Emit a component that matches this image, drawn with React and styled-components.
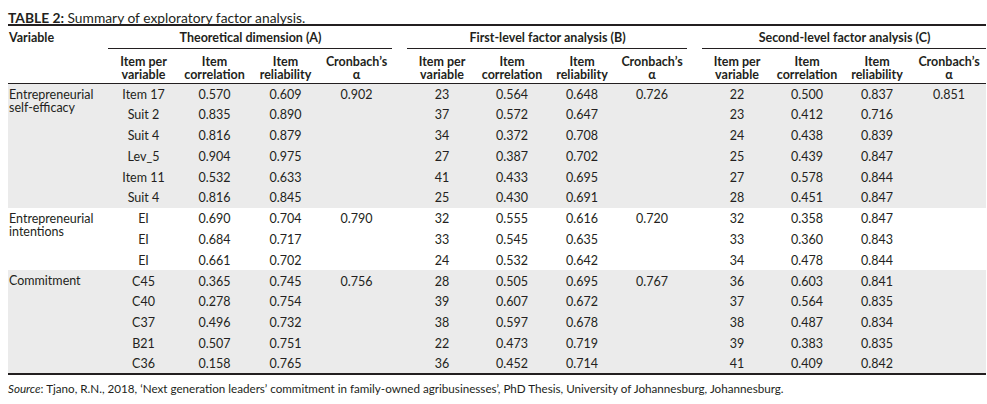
import React from "react";
import styled, { createGlobalStyle } from "styled-components";

const GlobalStyle = createGlobalStyle`
    body {
        margin: 0;
        background: #ffffff;
        font-family: Lato, "Open Sans", sans-serif;
        color: #231f20;
    }
`;

const Page = styled.div`
    padding: 8px 0 0 8px;
    width: 979px;
`;

const Caption = styled.div`
    font-size: 13.8px;
    line-height: 20px;
    height: 16px;
    white-space: nowrap;
`;

const Strong = styled.span`
    font-weight: 700;
`;

const Table = styled.table`
    width: 978px;
    border-collapse: collapse;
    table-layout: fixed;
    border-top: 2px solid #231f20;
    border-bottom: 2px solid #231f20;
    font-size: 12.5px;
`;

const Col = styled.col`
    width: ${p => p.w}px;
`;

const GroupRow = styled.tr`
    height: 23px;
`;

const HeadCell = styled.th`
    font-weight: 700;
    text-align: ${p => (p.left ? "left" : "center")};
    vertical-align: middle;
    padding: 1px 0 0 1px;
    line-height: 13px;
    white-space: nowrap;
    border-bottom: ${p => (p.underline ? "1px solid #231f20" : "none")};
`;

const SubRow = styled.tr`
    height: 35px;
    border-bottom: 1px solid #231f20;
`;

const SubCell = styled.th`
    font-weight: 700;
    text-align: center;
    vertical-align: top;
    padding: 6px 0 0;
    line-height: 13px;
`;

const Row = styled.tr`
    height: 20.8px;
    background: ${p => (p.shaded ? "#ebebeb" : "#ffffff")};
`;

const VarCell = styled.td`
    vertical-align: top;
    padding: 4px 0 0 1px;
    line-height: 13px;
`;

const Cell = styled.td`
    text-align: center;
    vertical-align: middle;
    padding: 1px 0 0;
    line-height: 13px;
    white-space: nowrap;
`;

const Source = styled.div`
    font-size: 11.65px;
    line-height: 15px;
    margin-top: 6px;
    white-space: nowrap;
`;

const groups = [
    {
        name: "Entrepreneurial self-efficacy",
        shaded: true,
        alphas: ["0.902", "0.726", "0.851"],
        rows: [
            ["Item 17", "0.570", "0.609", "23", "0.564", "0.648", "22", "0.500", "0.837"],
            ["Suit 2", "0.835", "0.890", "37", "0.572", "0.647", "23", "0.412", "0.716"],
            ["Suit 4", "0.816", "0.879", "34", "0.372", "0.708", "24", "0.438", "0.839"],
            ["Lev_5", "0.904", "0.975", "27", "0.387", "0.702", "25", "0.439", "0.847"],
            ["Item 11", "0.532", "0.633", "41", "0.433", "0.695", "27", "0.578", "0.844"],
            ["Suit 4", "0.816", "0.845", "25", "0.430", "0.691", "28", "0.451", "0.847"]
        ]
    },
    {
        name: "Entrepreneurial intentions",
        shaded: false,
        alphas: ["0.790", "0.720", ""],
        rows: [
            ["EI", "0.690", "0.704", "32", "0.555", "0.616", "32", "0.358", "0.847"],
            ["EI", "0.684", "0.717", "33", "0.545", "0.635", "33", "0.360", "0.843"],
            ["EI", "0.661", "0.702", "24", "0.532", "0.642", "34", "0.478", "0.844"]
        ]
    },
    {
        name: "Commitment",
        shaded: true,
        alphas: ["0.756", "0.767", ""],
        rows: [
            ["C45", "0.365", "0.745", "28", "0.505", "0.695", "36", "0.603", "0.841"],
            ["C40", "0.278", "0.754", "39", "0.607", "0.672", "37", "0.564", "0.835"],
            ["C37", "0.496", "0.732", "38", "0.597", "0.678", "38", "0.487", "0.834"],
            ["B21", "0.507", "0.751", "22", "0.473", "0.719", "39", "0.383", "0.835"],
            ["C36", "0.158", "0.765", "36", "0.452", "0.714", "41", "0.409", "0.842"]
        ]
    }
];

const subHeads = [
    ["Item per", "variable"],
    ["Item", "correlation"],
    ["Item", "reliability"],
    ["Cronbach\u2019s", "\u03b1"]
];

const widths = [100, 71, 71, 71, 71, 15, 70, 70, 70, 70, 15, 70, 70, 70, 74];

const SubHeads = () =>
    subHeads.map(([a, b], i) => (
        <SubCell key={i}>
            {a}
            <br />
            {b}
        </SubCell>
    ));

const Block = ({ values, alpha, first }) => (
    <>
        {values.map((v, i) => (
            <Cell key={i}>{v}</Cell>
        ))}
        <Cell>{first ? alpha : ""}</Cell>
    </>
);

export default function App() {
    return (
        <Page>
            <GlobalStyle />
            <Caption>
                <Strong>TABLE 2:</Strong> Summary of exploratory factor analysis.
            </Caption>
            <Table>
                <colgroup>
                    {widths.map((w, i) => (
                        <Col key={i} w={w} />
                    ))}
                </colgroup>
                <thead>
                    <GroupRow>
                        <HeadCell left>Variable</HeadCell>
                        <HeadCell colSpan={4} underline>
                            Theoretical dimension (A)
                        </HeadCell>
                        <HeadCell />
                        <HeadCell colSpan={4} underline>
                            First-level factor analysis (B)
                        </HeadCell>
                        <HeadCell />
                        <HeadCell colSpan={4} underline>
                            Second-level factor analysis (C)
                        </HeadCell>
                    </GroupRow>
                    <SubRow>
                        <SubCell />
                        <SubHeads />
                        <SubCell />
                        <SubHeads />
                        <SubCell />
                        <SubHeads />
                    </SubRow>
                </thead>
                <tbody>
                    {groups.map(g =>
                        g.rows.map((r, i) => (
                            <Row key={g.name + i} shaded={g.shaded}>
                                {i === 0 && (
                                    <VarCell rowSpan={g.rows.length}>
                                        {g.name}
                                    </VarCell>
                                )}
                                <Block values={r.slice(0, 3)} alpha={g.alphas[0]} first={i === 0} />
                                <Cell />
                                <Block values={r.slice(3, 6)} alpha={g.alphas[1]} first={i === 0} />
                                <Cell />
                                <Block values={r.slice(6, 9)} alpha={g.alphas[2]} first={i === 0} />
                            </Row>
                        ))
                    )}
                </tbody>
            </Table>
            <Source>
                <em>Source</em>: Tjano, R.N., 2018, {"\u2018"}Next generation leaders{"\u2019"} commitment in
                family-owned agribusinesses{"\u2019"}, PhD Thesis, University of Johannesburg, Johannesburg.
            </Source>
        </Page>
    );
}
